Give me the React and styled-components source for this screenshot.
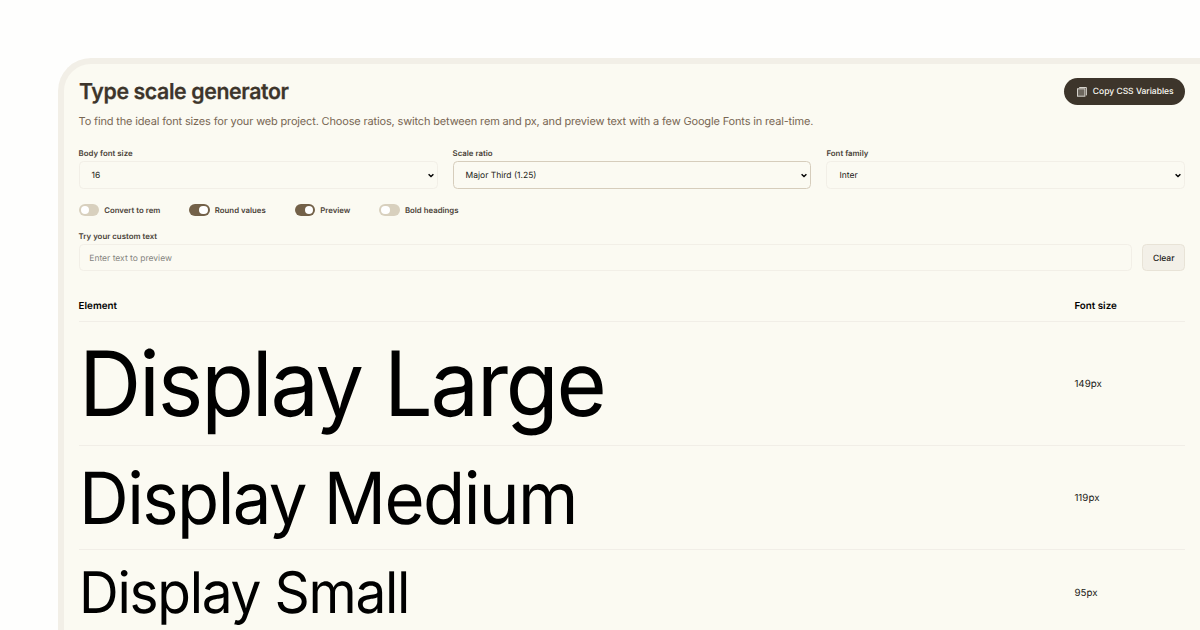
import React from "react";
import styled, { createGlobalStyle } from "styled-components";

const GlobalStyle = createGlobalStyle`
  *, *::before, *::after { box-sizing: border-box; }
  body {
    margin: 0;
    height: 630px;
    overflow: hidden;
    background: #fefefd;
    font-family: Inter, "Liberation Sans", sans-serif;
    color: #000;
    text-rendering: geometricPrecision;
    -webkit-font-smoothing: antialiased;
  }
  button, input { text-rendering: inherit; }
`;

const Page = styled.div`
  height: 630px;
  padding: 58px 0 0 58px;
  overflow: hidden;
`;

const Panel = styled.main`
  height: 620px;
  padding: 14.4px 14.6px 0 14.6px;
  background: #fbfaf2;
  border: 6px solid #f2efe7;
  border-right: 0;
  border-bottom: 0;
  border-top-left-radius: 33px;
`;

const Header = styled.header`
  display: flex;
  justify-content: space-between;
  align-items: flex-start;
  height: 36px;
`;

const Title = styled.h1`
  margin: 0;
  font-size: 22px;
  line-height: 28px;
  font-weight: 600;
  letter-spacing: -0.39px;
  transform: scaleX(0.967);
  transform-origin: left center;
  -webkit-text-stroke: 0.25px #3d352b;
  color: #3d352b;
`;

const CopyButton = styled.button`
  display: flex;
  align-items: center;
  gap: 6px;
  height: 26.6px;
  padding: 1px 11.8px 0 13px;
  border: 0;
  border-radius: 14px;
  background: #3d352b;
  color: #fbfaf3;
  font: 500 8.5px Inter, sans-serif;
  white-space: nowrap;
`;

const Intro = styled.p`
  margin: 0;
  height: 33px;
  font-size: 11px;
  line-height: 15px;
  letter-spacing: -0.159px;
  color: #786652;
`;

const Fields = styled.div`
  display: grid;
  grid-template-columns: repeat(3, 1fr);
  gap: 15px;
`;

const Label = styled.label`
  display: block;
  height: 13.8px;
  font-size: 7.85px;
  line-height: 12px;
  font-weight: 600;
  color: #4a4238;
`;

const Select = styled.div`
  display: flex;
  align-items: center;
  justify-content: space-between;
  height: 28.2px;
  padding: 1.5px 2px 0 12px;
  border: 1px solid ${(p) => (p.$active ? "#d6cdbc" : "#f2efe7")};
  border-radius: 4.5px;
  font-size: 8.5px;
  color: #1c1a17;
`;

const Toggles = styled.div`
  display: flex;
  gap: 29px;
  height: 40.8px;
  padding-top: 14.4px;
`;

const Toggle = styled.div`
  display: flex;
  align-items: center;
  gap: 4.8px;
  height: 12.4px;
  font-size: 7.8px;
  font-weight: 600;
  color: #4a4238;
`;

const Track = styled.span`
  display: flex;
  justify-content: ${(p) => (p.$on ? "flex-end" : "flex-start")};
  align-items: center;
  width: 20.8px;
  height: 12.2px;
  padding: 0 2px;
  border-radius: 7px;
  background: ${(p) => (p.$on ? "#736149" : "#d8d0be")};
`;

const Knob = styled.span`
  width: 8.6px;
  height: 8.6px;
  border-radius: 50%;
  background: #fff;
`;

const PreviewRow = styled.div`
  display: flex;
  gap: 9.6px;
  height: 26.8px;
`;

const TextInput = styled.input`
  flex: 1;
  min-width: 0;
  padding: 2.5px 9.7px 0;
  border: 1px solid #f2efe7;
  border-radius: 4.5px;
  background: transparent;
  font: 400 8.5px Inter, sans-serif;
  &::placeholder { color: #85847f; opacity: 1; }
`;

const ClearButton = styled.button`
  width: 43.4px;
  padding: 2.5px 0 0;
  border: 1px solid #e8e3d7;
  border-radius: 4.5px;
  background: #f3f0e8;
  color: #1c1a17;
  font: 500 8.5px Inter, sans-serif;
`;

const Table = styled.div`
  margin-top: 20px;
`;

const Row = styled.div`
  display: grid;
  grid-template-columns: 1fr 111px;
  align-items: center;
  height: ${(p) => p.$height}px;
  border-bottom: 1px solid #f1eee7;
`;

const HeadRow = styled(Row)`
  padding-top: 1px;
  font-size: 9.8px;
  font-weight: 600;
`;

const Sample = styled.div`
  padding-top: ${(p) => p.$drop}px;
  font-size: ${(p) => p.$size}px;
  line-height: 1;
  letter-spacing: ${(p) => p.$tracking}px;
  transform: scaleX(0.96);
  transform-origin: left center;
  white-space: nowrap;
`;

const Size = styled.div`
  padding-top: 2px;
  font-size: 9.75px;
  color: #1c1a17;
`;

const Chevron = () => (
  <svg width="8" height="6" viewBox="0 0 8 6" fill="none">
    <path d="M1.6 1.2 4 3.6 6.4 1.2" stroke="#000" strokeWidth="1.4" />
  </svg>
);

const CopyIcon = () => (
  <svg width="10" height="10" viewBox="0 0 10 10" fill="none">
    <rect x="0.5" y="1.8" width="7.4" height="7.4" fill="#fbfaf3" fillOpacity="0.25" stroke="#d6d3cc" strokeWidth="1" />
    <path d="M2.2 0.5H9.4V8.4" stroke="#d6d3cc" strokeWidth="1" />
  </svg>
);

const fields = [
  { label: "Body font size", value: "16" },
  { label: "Scale ratio", value: "Major Third (1.25)", active: true },
  { label: "Font family", value: "Inter" },
];

const toggles = [
  { label: "Convert to rem", on: false },
  { label: "Round values", on: true },
  { label: "Preview", on: true },
  { label: "Bold headings", on: false },
];

const rows = [
  { name: "Display Large", px: "149px", size: 89.9, height: 124.3, tracking: -2.27, drop: 1 },
  { name: "Display Medium", px: "119px", size: 71.8, height: 103.7, tracking: -1.66, drop: 2 },
  { name: "Display Small", px: "95px", size: 57.3, height: 87, tracking: -1.31, drop: 0 },
];

export default function App() {
  return (
    <Page>
      <GlobalStyle />
      <Panel>
        <Header>
          <Title>Type scale generator</Title>
          <CopyButton><CopyIcon />Copy CSS Variables</CopyButton>
        </Header>
        <Intro>
          To find the ideal font sizes for your web project. Choose ratios, switch between rem and px, and preview text with a few Google Fonts in real-time.
        </Intro>
        <Fields>
          {fields.map((f) => (
            <div key={f.label}>
              <Label>{f.label}</Label>
              <Select $active={f.active}>{f.value}<Chevron /></Select>
            </div>
          ))}
        </Fields>
        <Toggles>
          {toggles.map((t) => (
            <Toggle key={t.label}>
              <Track $on={t.on}><Knob /></Track>
              {t.label}
            </Toggle>
          ))}
        </Toggles>
        <Label>Try your custom text</Label>
        <PreviewRow>
          <TextInput placeholder="Enter text to preview" />
          <ClearButton>Clear</ClearButton>
        </PreviewRow>
        <Table>
          <HeadRow $height={31}><span>Element</span><span>Font size</span></HeadRow>
          {rows.map((r) => (
            <Row key={r.name} $height={r.height}>
              <Sample $size={r.size} $tracking={r.tracking} $drop={r.drop}>{r.name}</Sample>
              <Size>{r.px}</Size>
            </Row>
          ))}
        </Table>
      </Panel>
    </Page>
  );
}
